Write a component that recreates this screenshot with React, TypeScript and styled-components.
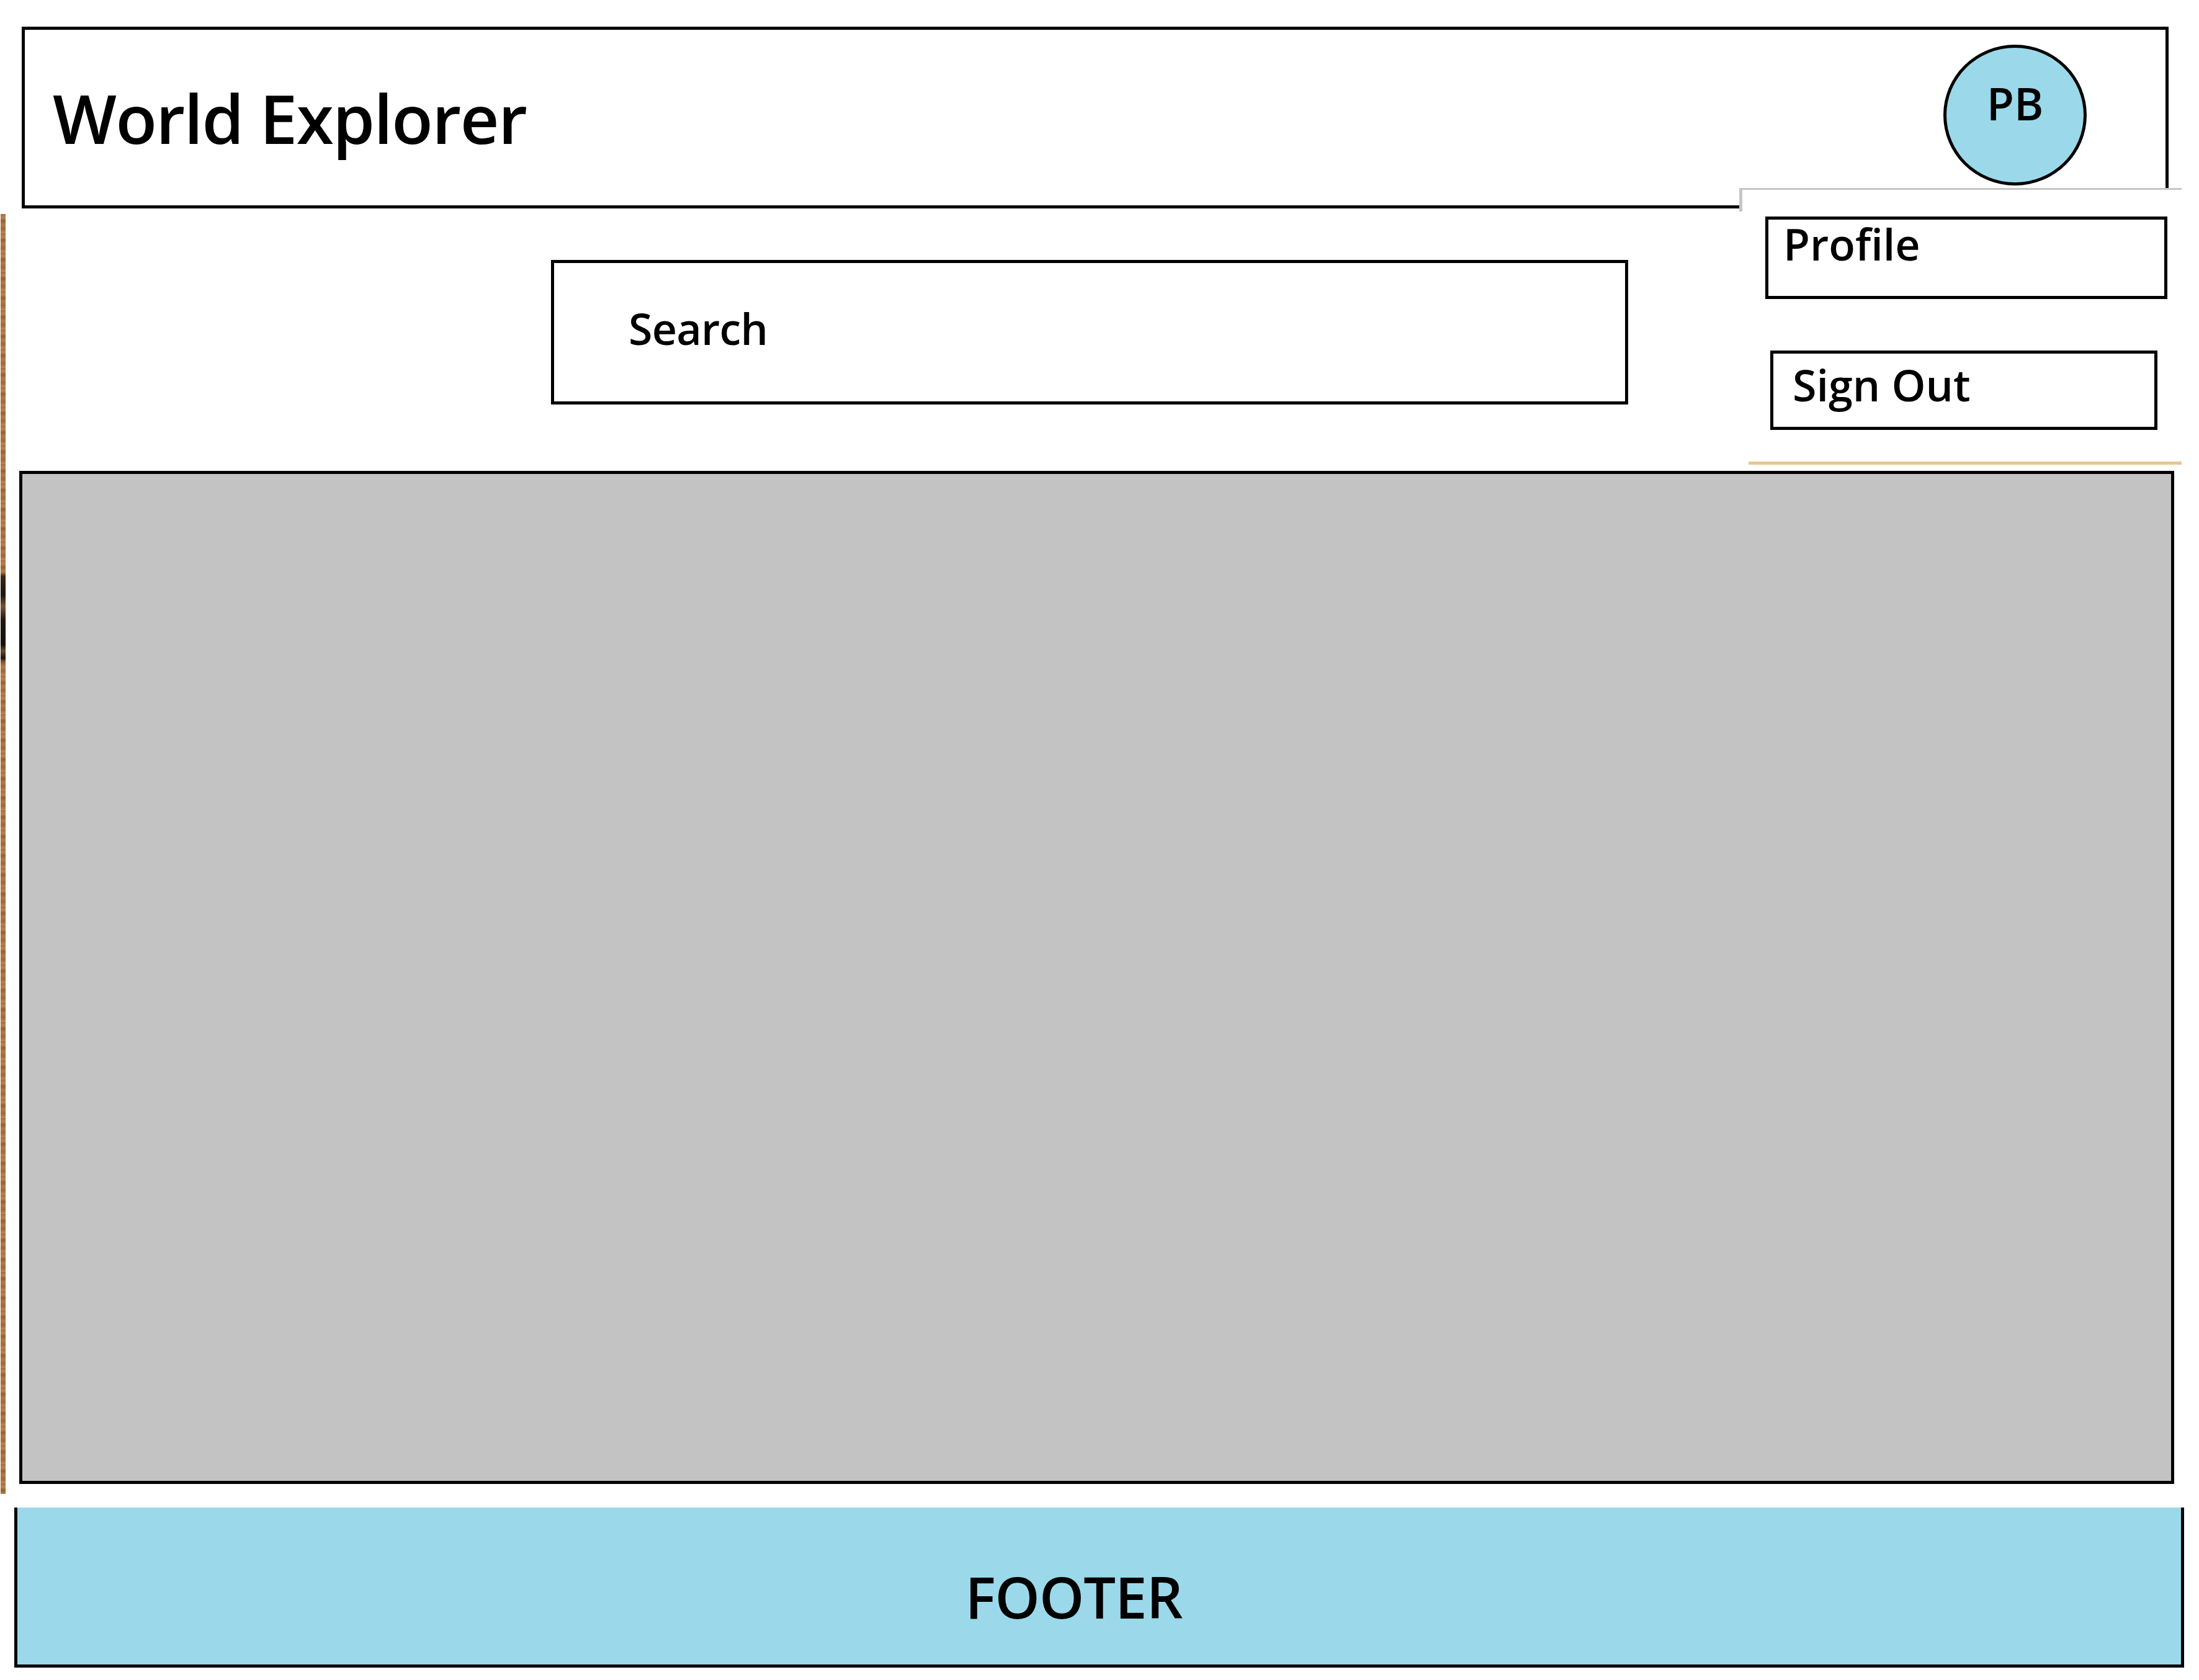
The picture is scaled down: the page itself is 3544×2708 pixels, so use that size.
import React from "react";
import styled, { createGlobalStyle } from "styled-components";

const GlobalStyle = createGlobalStyle`
  html, body {
    margin: 0;
    padding: 0;
    background: #ffffff;
  }
  body {
    font-family: "Open Sans", "Noto Sans", "Liberation Sans", sans-serif;
    color: #000000;
  }
  * { box-sizing: border-box; }
`;

const Page = styled.div`
  width: 3544px;
  min-height: 2708px;
  display: flex;
  flex-direction: column;
  background: #ffffff;
`;

const Header = styled.header`
  position: relative;
  margin: 43px 0 0 35px;
  width: 3460px;
  height: 293px;
  border: 5px solid #000000;
  display: flex;
  align-items: center;
  justify-content: space-between;
  padding-left: 45px;
`;

const Title = styled.h1`
  margin: 0;
  font-size: 109px;
  line-height: 1;
  font-weight: 600;
  letter-spacing: -1.6px;
`;

const Avatar = styled.div`
  align-self: flex-start;
  margin: 24px 127px 0 0;
  width: 231px;
  height: 227px;
  border-radius: 50%;
  border: 5px solid #000000;
  background: #9bd9ea;
  display: flex;
  justify-content: center;
  align-items: flex-start;
  padding-top: 53px;
  font-size: 72px;
  line-height: 1;
  font-weight: 600;
`;

const Dropdown = styled.nav`
  position: absolute;
  top: 255px;
  left: 2763px;
  width: 713px;
  z-index: 10;
  background: #ffffff;
  border-top: 3px solid #c6c6c6;
  display: flex;
  flex-direction: column;

  &::before {
    content: "";
    position: absolute;
    left: 0;
    top: -3px;
    width: 5px;
    height: 38px;
    background: #c6c6c6;
  }
`;

const MenuList = styled.div`
  margin-left: 15px;
  display: flex;
  flex-direction: column;
  align-items: flex-start;
  padding-bottom: 51px;
  border-bottom: 5px solid #e8c58f;
`;

const MenuItem = styled.button<{
  $width: number;
  $height: number;
  $indent: number;
  $gap: number;
  $padTop: number;
  $padLeft: number;
}>`
  margin: ${(p) => p.$gap}px 0 0 ${(p) => p.$indent}px;
  width: ${(p) => p.$width}px;
  height: ${(p) => p.$height}px;
  border: 5px solid #000000;
  background: #ffffff;
  color: #000000;
  display: flex;
  align-items: flex-start;
  justify-content: flex-start;
  padding: ${(p) => p.$padTop}px 0 0 ${(p) => p.$padLeft}px;
  font-family: "Open Sans", "Noto Sans", "Liberation Sans", sans-serif;
  font-size: 70px;
  line-height: 1;
  font-weight: 600;
  cursor: pointer;
`;

const Main = styled.main`
  margin-top: 9px;
  display: flex;
  align-items: stretch;
`;

const WoodStrip = styled.div`
  margin-left: 1px;
  width: 8px;
  flex-shrink: 0;
  background:
    linear-gradient(
      to bottom,
      transparent 0,
      transparent 578px,
      #3a2616 584px,
      #1f140c 614px,
      #7a5434 632px,
      #24170e 654px,
      #14100c 694px,
      #6a4a30 704px,
      #1c130c 716px,
      transparent 724px,
      transparent 100%
    ),
    repeating-linear-gradient(
      to bottom,
      #a56d3d 0,
      #b9854f 6px,
      #96602f 11px,
      #b27c48 17px,
      #a06838 24px,
      #bd8a58 31px
    );
`;

const Content = styled.div`
  flex: 1;
  display: flex;
  flex-direction: column;
  padding-bottom: 16px;
`;

const SearchInput = styled.input`
  margin: 74px 0 0 879px;
  width: 1736px;
  height: 233px;
  border: 5px solid #000000;
  border-radius: 0;
  outline: none;
  background: #ffffff;
  padding: 0 0 14px 120px;
  font-family: "Open Sans", "Noto Sans", "Liberation Sans", sans-serif;
  font-size: 70px;
  font-weight: 600;
  letter-spacing: -0.8px;
  color: #000000;

  &::placeholder {
    color: #000000;
    opacity: 1;
  }
`;

const MapArea = styled.section`
  margin: 107px 0 0 22px;
  width: 3473px;
  height: 1633px;
  border: 5px solid #000000;
  background: #c3c3c3;
`;

const Footer = styled.footer`
  margin: 22px 0 0 23px;
  width: 3497px;
  height: 258px;
  border: 5px solid #000000;
  border-top: none;
  background: #9bd9ea;
  display: flex;
  justify-content: center;
  align-items: center;
  padding: 34px 82px 0 0;
  font-size: 92px;
  line-height: 1;
  font-weight: 600;
  letter-spacing: -1px;
`;

export default function App() {
  return (
    <Page>
      <GlobalStyle />
      <Header>
        <Title>World Explorer</Title>
        <Avatar>PB</Avatar>
        <Dropdown>
          <MenuList>
            <MenuItem $width={648} $height={133} $indent={27} $gap={43} $padTop={4} $padLeft={24}>
              Profile
            </MenuItem>
            <MenuItem $width={624} $height={128} $indent={35} $gap={83} $padTop={15} $padLeft={31}>
              Sign Out
            </MenuItem>
          </MenuList>
        </Dropdown>
      </Header>
      <Main>
        <WoodStrip />
        <Content>
          <SearchInput placeholder="Search" />
          <MapArea />
        </Content>
      </Main>
      <Footer>FOOTER</Footer>
    </Page>
  );
}
